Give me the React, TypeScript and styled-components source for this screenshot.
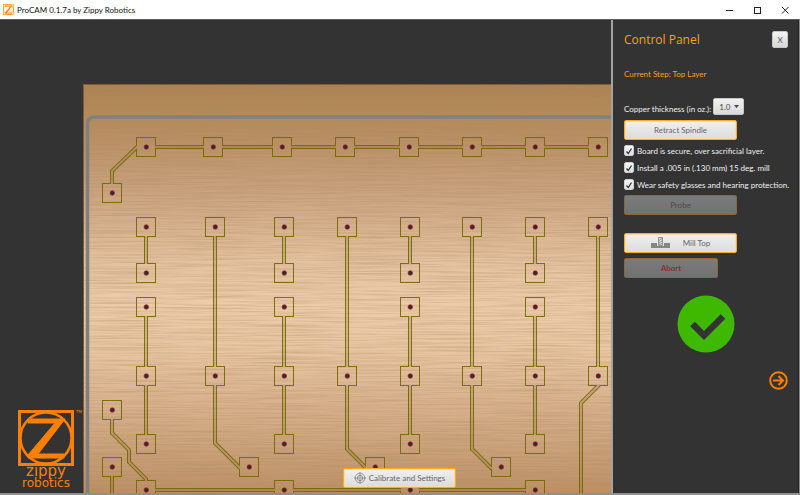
import React from "react";
import styled, { createGlobalStyle } from "styled-components";

const ORANGE = "#ff8000";
const AMBER = "#f5a30a";
const DARK = "#333333";

const GlobalStyle = createGlobalStyle`
  *, *::before, *::after { box-sizing: border-box; }
  body { margin: 0; background: ${DARK}; }
  body, button, select, input {
    font-family: Lato, "Open Sans", sans-serif;
    font-size: 8px;
  }
`;

const Window = styled.div`
  display: grid;
  grid-template-rows: auto minmax(0, 1fr);
  height: 100vh;
  background: ${DARK};
`;

const TitleBar = styled.header`
  display: flex;
  align-items: center;
  gap: 3px;
  height: 19px;
  padding: 0 9px 0 3px;
  background: #fff;
`;

const WindowTitle = styled.h1`
  flex: 1;
  margin: 0;
  font-size: 8px;
  font-weight: 400;
  line-height: 12px;
  color: #111;
`;

const WindowControls = styled.div`
  display: flex;
  gap: 16px;
`;

const ControlButton = styled.button`
  display: flex;
  align-items: center;
  justify-content: center;
  width: 12px;
  height: 12px;
  padding: 0;
  border: 0;
  background: none;
`;

const Stage = styled.main`
  display: grid;
  grid-template-columns: minmax(0, 1fr) 188px;
  grid-template-rows: minmax(0, 1fr);
  min-height: 0;
  overflow: hidden;
  border-top: 1px solid #5c5c5c;
  border-right: 1px solid #8a8a8a;
  border-bottom: 2px solid #8f8f8f;
`;

const Board = styled.svg`
  grid-area: 1 / 1 / 2 / 3;
  display: block;
  width: 100%;
  height: 100%;
`;

const Brand = styled.div`
  grid-area: 1 / 1 / 2 / 2;
  place-self: end start;
  display: grid;
  grid-template-columns: 56px auto;
  column-gap: 2px;
  margin: 0 0 2px 18px;
  color: ${ORANGE};
  font-family: "DejaVu Sans", sans-serif;
`;

const TradeMark = styled.span`
  font-size: 4px;
  line-height: 4px;
`;

const BrandWord = styled.span<{ $size: number; $line: number }>`
  font-size: ${(p) => p.$size}px;
  line-height: ${(p) => p.$line}px;
  text-align: center;
`;

const FloatingAction = styled.div`
  grid-area: 1 / 1 / 2 / 3;
  place-self: end center;
  margin-bottom: 5px;
`;

const Panel = styled.aside`
  grid-area: 1 / 2 / 2 / 3;
  display: flex;
  flex-direction: column;
  align-items: flex-start;
  padding: 11px 10px 0 11px;
  overflow: hidden;
  border-left: 2px solid #a3a3a3;
  border-right: 1px solid #222;
  background: ${DARK};
  color: #f2f2f2;
`;

const PanelHeader = styled.div`
  display: flex;
  align-items: center;
  justify-content: space-between;
  align-self: stretch;
`;

const PanelTitle = styled.h2`
  margin: 0;
  font-family: "Open Sans", sans-serif;
  font-size: 12px;
  font-weight: 400;
  line-height: 17px;
  color: ${AMBER};
`;

const CloseButton = styled.button`
  width: 16px;
  height: 17px;
  padding: 0;
  border: 1px solid #c6c6c6;
  border-radius: 2px;
  background: linear-gradient(#f4f4f4, #d8d8d8);
  color: #555;
  line-height: 12px;
`;

const StepText = styled.p`
  margin: 20px 0 18px;
  line-height: 12px;
  color: ${AMBER};
`;

const FieldRow = styled.div`
  display: flex;
  align-items: flex-end;
  gap: 2px;
  line-height: 12px;
`;

const SelectBox = styled.div`
  display: grid;
  align-items: center;
  & > * { grid-area: 1 / 1; }
  & > svg { justify-self: end; margin-right: 5px; pointer-events: none; }
`;

const Select = styled.select`
  appearance: none;
  width: 31px;
  height: 17px;
  padding: 0 0 0 5px;
  border: 1px solid #c6c6c6;
  border-radius: 2px;
  background: linear-gradient(#f2f2f2, #dadada);
  color: #444;
`;

const ActionButton = styled.button<{ $width?: number; $gap?: number; $top?: number; $tone?: string }>`
  display: flex;
  align-items: center;
  justify-content: center;
  gap: ${(p) => p.$gap ?? 0}px;
  width: ${(p) => p.$width ?? 113}px;
  height: 20px;
  margin-top: ${(p) => p.$top ?? 0}px;
  padding: 0;
  border: 1px solid #f9ad25;
  border-radius: 2px;
  box-shadow: inset 0 0 0 1px #fbdc9c;
  background: linear-gradient(#f0f0f0, #dcdcdc);
  color: ${(p) => p.$tone ?? "#666"};
  line-height: 12px;

  &:disabled {
    border-color: #87683a;
    box-shadow: none;
    background: linear-gradient(#7b7b7b, #717171);
    color: ${(p) => p.$tone ?? "#4c4c4c"};
  }
`;

const CheckList = styled.div`
  display: flex;
  flex-direction: column;
  margin: 2px 0;
`;

const CheckLabel = styled.label`
  display: flex;
  align-items: center;
  gap: 3px;
  height: 17px;
  line-height: 12px;
  white-space: nowrap;
`;

const CheckBox = styled.span`
  display: grid;
  place-items: center;
  & > * { grid-area: 1 / 1; }
  & > svg { pointer-events: none; visibility: hidden; }
  & > input:checked + svg { visibility: visible; }
`;

const CheckInput = styled.input`
  appearance: none;
  width: 10px;
  height: 11px;
  margin: 0;
  border: 1px solid #d0d0d0;
  border-radius: 2px;
  background: linear-gradient(#f7f7f7, #dedede);
`;

const StatusIcon = styled.svg`
  align-self: center;
  flex: none;
  margin-top: 17px;
`;

const NextButton = styled.button`
  display: flex;
  align-self: flex-end;
  flex: none;
  margin-top: 18px;
  padding: 0;
  border: 0;
  background: none;
`;

type Point = [number, number];

const EVEN = [146, 284, 410, 535];
const ALL = [146, 215, 284, 347, 410, 472, 535, 598];

const PADS: Point[] = [
  ...[146, 213, 282, 345, 409, 472, 535, 598].map((x): Point => [x, 147]),
  ...ALL.map((x): Point => [x, 227]),
  ...EVEN.map((x): Point => [x, 273]),
  ...EVEN.map((x): Point => [x, 307]),
  ...ALL.map((x): Point => [x, 376]),
  ...EVEN.map((x): Point => [x, 444]),
  ...EVEN.map((x): Point => [x, 490]),
  [112, 193],
  [112, 410],
  [112, 467],
  [249, 467],
  [375, 467],
  [501, 467],
];

const TRACES: string[] = [
  "M598 147H146",
  "M138 146L112 171V193",
  ...EVEN.map((x) => `M${x} 227V273M${x} 307V444`),
  "M215 227V443L240 468H249",
  "M347 227V449L366 468H375",
  "M472 227V449L491 468H501",
  "M598 227V376",
  "M599 385L581 403V560",
  "M112 410V433L129 450V462L146 479V490",
  "M112 467V560",
  "M146 490H536",
];

function CopperBoard() {
  return (
    <Board role="img" aria-label="Circuit board top layer">
      <defs>
        <linearGradient id="copper" gradientUnits="userSpaceOnUse" x1="0" y1="84" x2="0" y2="540">
          <stop offset="0" stopColor="#ad8250" />
          <stop offset="0.12" stopColor="#b98f64" />
          <stop offset="0.25" stopColor="#cca581" />
          <stop offset="0.38" stopColor="#e3c09e" />
          <stop offset="0.48" stopColor="#edcba9" />
          <stop offset="0.58" stopColor="#e9c6a3" />
          <stop offset="0.72" stopColor="#d6af8a" />
          <stop offset="0.84" stopColor="#c49a71" />
          <stop offset="0.92" stopColor="#b98b5f" />
          <stop offset="1" stopColor="#b08355" />
        </linearGradient>
        <filter id="brushed" x="0" y="0" width="100%" height="100%">
          <feTurbulence type="fractalNoise" baseFrequency="0.012 0.7" numOctaves="3" seed="21" />
          <feColorMatrix values="0 0 0 0 0.4  0 0 0 0 0.25  0 0 0 0 0.12  0.8 0 0 0 -0.3" />
        </filter>
        <mask id="milled" maskUnits="userSpaceOnUse" x="0" y="0" width="3000" height="2000">
          <g fill="none" stroke="#fff" strokeWidth="4">
            {TRACES.map((d) => <path key={d} d={d} />)}
          </g>
          {PADS.map(([x, y]) => (
            <rect key={`${x}-${y}`} x={x - 10} y={y - 10} width="20" height="20" fill="#fff" />
          ))}
          <g fill="none" stroke="#333" strokeWidth="2">
            {TRACES.map((d) => <path key={d} d={d} />)}
          </g>
          {PADS.map(([x, y]) => (
            <rect key={`${x}-${y}`} x={x - 9} y={y - 9} width="18" height="18" fill="#000" />
          ))}
        </mask>
      </defs>
      <g transform="translate(0 -20)">
        <rect x="83" y="84" width="100%" height="100%" fill="url(#copper)" />
        <rect x="83" y="84" width="100%" height="100%" filter="url(#brushed)" />
        <path d="M83.500 900V84.500H3000" fill="none" stroke="#7d5c37" />
        <path d="M87.500 900V124Q87.500 117 94.500 117H3000" fill="none" stroke="#808080" strokeWidth="3.500" />
        <rect width="100%" height="1000" fill="#746605" mask="url(#milled)" opacity="0.9" />
        {PADS.map(([x, y]) => (
          <circle key={`${x}-${y}`} cx={x + 0.3} cy={y} r="2.300" fill="#2b2d33" stroke="#b0262b" strokeWidth="0.700" />
        ))}
      </g>
    </Board>
  );
}

function ZMark({ size }: { size: number }) {
  return (
    <svg width={size} height={size} viewBox="0 0 56 56" fill="none" stroke={ORANGE} aria-hidden="true">
      <rect x="1.500" y="1.500" width="53" height="53" strokeWidth="3" />
      <circle cx="28" cy="28" r="25.500" strokeWidth="2.500" />
      <path d="M10 9H47L20 44H46V48H10V45L37 13H10Z" fill={ORANGE} strokeWidth="1" />
    </svg>
  );
}

function Logo() {
  return (
    <Brand>
      <ZMark size={56} />
      <TradeMark>TM</TradeMark>
      <BrandWord $size={15} $line={10}>zippy</BrandWord>
      <span />
      <BrandWord $size={12} $line={15}>robotics</BrandWord>
    </Brand>
  );
}

function MillIcon() {
  return (
    <svg width="20" height="12" viewBox="0 0 20 12" aria-hidden="true">
      <path d="M0 6H6V9H13V6H19V11H0Z" fill="#858585" />
      <path d="M7.500 0.500H11.500V8.500H7.500ZM7.500 4L11.500 1M7.500 6.500L11.500 3.500M7.500 8.500L11.500 6" fill="#ddd" stroke="#8a8a8a" strokeWidth="0.900" />
    </svg>
  );
}

function TargetIcon() {
  return (
    <svg width="12" height="12" viewBox="0 0 12 12" fill="none" stroke="#848484" strokeWidth="0.800" aria-hidden="true">
      <circle cx="6" cy="6" r="4.800" />
      <circle cx="6" cy="6" r="2.700" />
      <path d="M6 0V5M6 7V12M0 6H5M7 6H12" />
      <circle cx="6" cy="6" r="0.600" />
    </svg>
  );
}

const STEPS = [
  "Board is secure, over sacrificial layer.",
  "Install a .005 in (.130 mm) 15 deg. mill",
  "Wear safety glasses and hearing protection.",
];

export default function App() {
  return (
    <Window>
      <GlobalStyle />
      <TitleBar>
        <ZMark size={11} />
        <WindowTitle>ProCAM 0.1.7a by Zippy Robotics</WindowTitle>
        <WindowControls>
          <ControlButton aria-label="Minimize">
            <svg width="8" height="8" stroke="#222"><path d="M1 4.500H8" /></svg>
          </ControlButton>
          <ControlButton aria-label="Maximize">
            <svg width="8" height="8" stroke="#222" fill="none"><rect x="1.500" y="1.500" width="6" height="6" /></svg>
          </ControlButton>
          <ControlButton aria-label="Close">
            <svg width="8" height="8" stroke="#222"><path d="M1 1L7.500 7.500M7.500 1L1 7.500" /></svg>
          </ControlButton>
        </WindowControls>
      </TitleBar>
      <Stage>
        <CopperBoard />
        <Logo />
        <FloatingAction>
          <ActionButton $gap={3}>
            <TargetIcon />
            Calibrate and Settings
          </ActionButton>
        </FloatingAction>
        <Panel>
          <PanelHeader>
            <PanelTitle>Control Panel</PanelTitle>
            <CloseButton aria-label="Close panel">X</CloseButton>
          </PanelHeader>
          <StepText>Current Step: Top Layer</StepText>
          <FieldRow>
            <label htmlFor="thickness">Copper thickness (in oz.):</label>
            <SelectBox>
              <Select id="thickness" defaultValue="1.0">
                <option>0.5</option>
                <option>1.0</option>
                <option>2.0</option>
              </Select>
              <svg width="5" height="3" aria-hidden="true"><path d="M0 0H5L2.500 3Z" fill="#444" /></svg>
            </SelectBox>
          </FieldRow>
          <ActionButton $top={5}>Retract Spindle</ActionButton>
          <CheckList>
            {STEPS.map((text) => (
              <CheckLabel key={text}>
                <CheckBox>
                  <CheckInput type="checkbox" defaultChecked />
                  <svg width="8" height="8" fill="none" stroke="#333" strokeWidth="1.300" aria-hidden="true">
                    <path d="M1.500 4.500L3.300 6.500L6.500 1.500" />
                  </svg>
                </CheckBox>
                {text}
              </CheckLabel>
            ))}
          </CheckList>
          <ActionButton disabled>Probe</ActionButton>
          <ActionButton $top={18} $gap={12}>
            <MillIcon />
            Mill Top
          </ActionButton>
          <ActionButton $top={5} $width={94} $tone="#8a1c1c" disabled>Abort</ActionButton>
          <StatusIcon width="58" height="58" viewBox="0 0 58 58" role="img" aria-label="Ready">
            <circle cx="29" cy="29" r="28.500" fill="#3fb800" />
            <path d="M15.500 29L27 40.500L46 21.500" fill="none" stroke={DARK} strokeWidth="6.500" strokeLinejoin="miter" />
          </StatusIcon>
          <NextButton aria-label="Next step">
            <svg width="19" height="19" viewBox="0 0 19 19" fill="none" stroke={ORANGE} strokeWidth="2">
              <circle cx="9.500" cy="9.500" r="8.300" />
              <path d="M4 9.500H14M9.500 5L14 9.500L9.500 14" />
            </svg>
          </NextButton>
        </Panel>
      </Stage>
    </Window>
  );
}
